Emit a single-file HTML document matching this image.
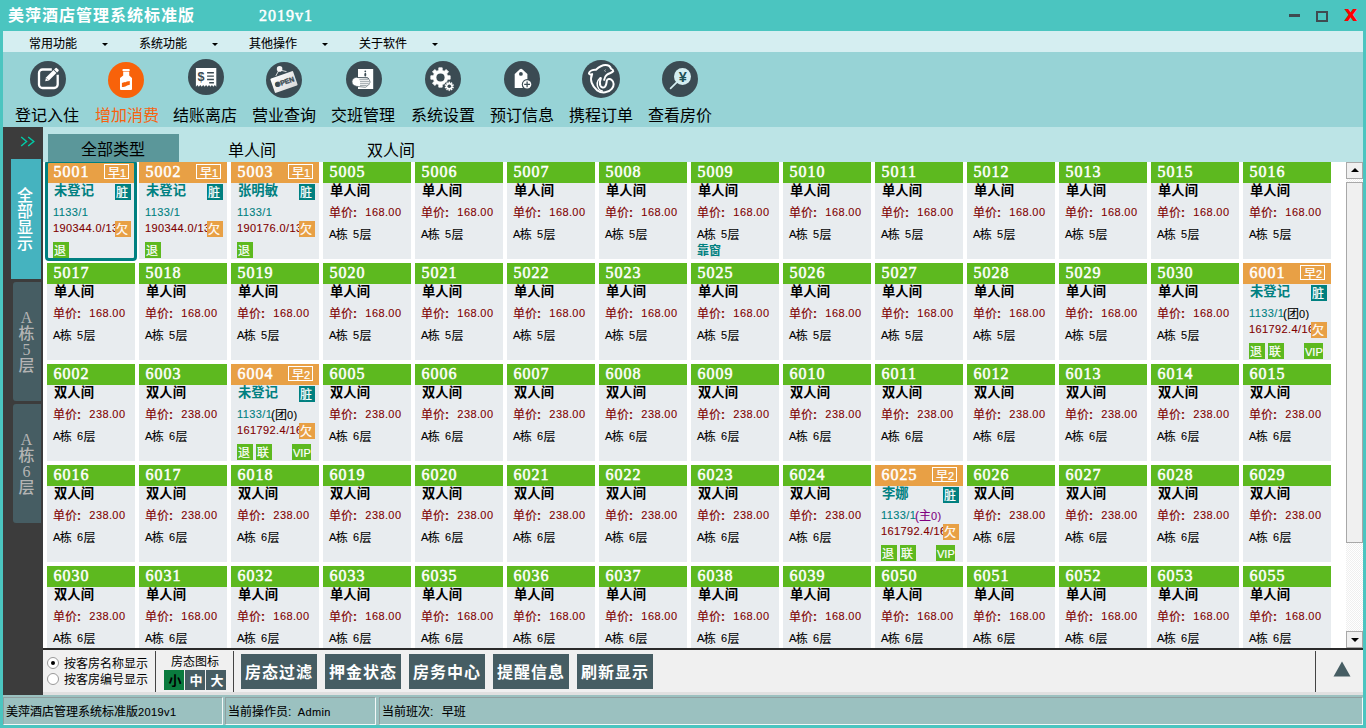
<!DOCTYPE html><html lang="zh-CN"><head><meta charset="utf-8"><title>美萍酒店管理系统标准版</title><style>
*{margin:0;padding:0;box-sizing:border-box}
html,body{width:1366px;height:728px;overflow:hidden}
body{background:#4bc5c0;position:relative;font-family:"Liberation Sans","Noto Sans CJK SC",sans-serif;font-size:12px;color:#000;line-height:1}
.a{position:absolute}
.t{position:absolute;white-space:nowrap;line-height:1}
#title{left:8px;top:8px;font-size:16px;font-weight:bold;color:#fff;letter-spacing:1px}
#ver{left:259px;top:8px;font-size:16px;-webkit-text-stroke:.5px #fff;color:#fff;letter-spacing:1px;font-family:"Liberation Serif","Noto Serif CJK SC",serif}
#menubar{left:3px;top:31px;width:1360px;height:21px;background:#d5eef1}
.mi{top:37.5px;font-size:12px}
.arr{position:absolute;top:43px;width:0;height:0;border-left:3px solid transparent;border-right:3px solid transparent;border-top:3px solid #000}
#toolbar{left:3px;top:52px;width:1360px;height:75px;background:#97d3d6}
.tl{top:108px;font-size:16px;width:80px;text-align:center}
.ic{position:absolute}
#tabs{left:43px;top:127px;width:1320px;height:35px;background:#bce4e6}
#tabsel{left:48px;top:134px;width:131px;height:28px;background:#5b979a}
.tab{font-size:16px}
#side{left:3px;top:127px;width:40px;height:568px;background:#3c3c3c}
.sb{position:absolute;font-size:16px;line-height:16px;text-align:center;font-weight:500;font-family:"Liberation Serif","Noto Sans CJK SC",sans-serif}
#grid{left:43px;top:162px;width:1303px;height:486px;background:#fff;overflow:hidden}
.c{position:absolute;width:88px;height:97px;background:#e8ecef}
.h{position:absolute;left:0;top:0;width:88px;height:21px}
.g{background:#5db91f}.o{background:#e8a045}
.n{position:absolute;left:6.5px;top:1.5px;font-size:16px;font-family:"Liberation Serif","Noto Serif CJK SC",serif;-webkit-text-stroke:.5px #fff;letter-spacing:1px;color:#fff;white-space:nowrap;line-height:16px}
.ty{position:absolute;left:7px;top:22px;font-size:13.33px;font-weight:bold;white-space:nowrap;line-height:14px}
.pr{position:absolute;left:6px;top:45px;word-spacing:5px;font-size:12px;color:#800000;white-space:nowrap;line-height:12px}
.fl{position:absolute;left:6px;top:67px;word-spacing:2px;font-size:12px;white-space:nowrap;line-height:12px}
.nm{position:absolute;left:7px;top:22px;font-size:13.33px;font-weight:bold;color:#008080;white-space:nowrap;line-height:14px}
.i1{position:absolute;left:6px;top:44px;font-size:12px;color:#008080;white-space:nowrap;line-height:12px}

.d{font-size:11px;letter-spacing:.4px}
.pr,.fl,.i1,.i2,.ex,.mi,.st{-webkit-text-stroke:.1px}
.pr .d,.fl .d{position:relative;top:-.6px}
.da{letter-spacing:-.7px}
.i2{position:absolute;left:6px;top:60px;font-size:12px;color:#800000;white-space:nowrap;line-height:12px;width:62px;overflow:hidden}
.bd{-webkit-text-stroke:.2px;position:absolute;width:16px;height:16px;color:#fff;font-size:12px;line-height:18px;text-align:left;padding-left:1px;white-space:nowrap;overflow:hidden}
.zang{left:68px;top:22px;background:#008080}
.qian{left:68px;top:59px;background:#e8a045}
.tui{left:6px;top:80px;background:#5db91f}
.lian{left:25px;top:80px;background:#5db91f}
.vip{left:61px;top:80px;width:19px;background:#5db91f;font-size:12px;padding-left:1px}
.zao{position:absolute;left:57px;top:2px;width:25px;-webkit-text-stroke:.2px;height:15px;border:1px solid #fff;color:#fff;font-size:12px;line-height:13px;padding-top:2px;padding-left:3px;text-align:left;white-space:nowrap}
.ex{position:absolute;left:40px;top:44.5px;font-size:12px;white-space:nowrap;line-height:12px}
.kc{position:absolute;left:6px;top:83px;font-size:12px;font-weight:bold;color:#008080;white-space:nowrap;line-height:12px}
#sel{left:2px;top:-2px;width:92px;height:101px;border:3px solid #008080;border-radius:4px}
#vscroll{left:1346px;top:162px;width:17px;height:486px;background:repeating-conic-gradient(#fff 0% 25%,#efefef 0% 50%) 0 0/2px 2px}
#bline{left:43px;top:648px;width:1320px;height:2px;background:#2a2a2a}
#bbar{left:43px;top:650px;width:1320px;height:45px;background:#f0f0f0}
.sep{position:absolute;top:651px;width:1px;height:41px;background:#444}
.btn{position:absolute;top:654px;width:76px;height:35px;background:#465d63;color:#fff;font-size:16px;font-weight:bold;text-align:center;line-height:37px;letter-spacing:1px;white-space:nowrap;overflow:hidden}
.sz{position:absolute;top:670px;width:20px;height:20px;font-size:13px;font-weight:bold;line-height:22px;text-align:center;padding-left:2px;overflow:hidden}
.radio{position:absolute;width:12px;height:12px;border-radius:50%;border:1px solid #999;background:#fff}
#status{left:3px;top:695px;width:1360px;height:30px;background:#9bc1c0}
.sp{position:absolute;top:697px;height:28px;border-top:1px solid #8f9f9f;border-left:1px solid #8f9f9f;border-right:1px solid #f4f8f8;border-bottom:1px solid #f4f8f8;background:#9bc1c0}
.st{top:706px;font-size:12px;word-spacing:3px}
</style></head><body>
<div class="t" id="title">美萍酒店管理系统标准版</div>
<div class="t" id="ver">2019v1</div>
<div class="a" style="left:1289px;top:14px;width:11px;height:3px;background:#3f4a50"></div>
<div class="a" style="left:1316px;top:11px;width:12px;height:11px;border:2px solid #3f4a50"></div>
<div class="t" style="left:1344px;top:4px;font-size:21px;font-weight:bold;color:#f00;font-family:&quot;DejaVu Sans&quot;,&quot;Liberation Sans&quot;,sans-serif">x</div>
<div class="a" id="menubar"></div>
<div class="t mi" style="left:29px">常用功能</div>
<div class="arr" style="left:102px"></div>
<div class="t mi" style="left:139px">系统功能</div>
<div class="arr" style="left:212px"></div>
<div class="t mi" style="left:249px">其他操作</div>
<div class="arr" style="left:322px"></div>
<div class="t mi" style="left:359px">关于软件</div>
<div class="arr" style="left:432px"></div>
<div class="a" id="toolbar"></div>
<div class="t tl" style="left:7px;color:#000">登记入住</div>
<div class="t tl" style="left:87px;color:#f8620e">增加消费</div>
<div class="t tl" style="left:165px;color:#000">结账离店</div>
<div class="t tl" style="left:244px;color:#000">营业查询</div>
<div class="t tl" style="left:323px;color:#000">交班管理</div>
<div class="t tl" style="left:403px;color:#000">系统设置</div>
<div class="t tl" style="left:482px;color:#000">预订信息</div>
<div class="t tl" style="left:561px;color:#000">携程订单</div>
<div class="t tl" style="left:640px;color:#000">查看房价</div>
<svg class="ic" style="left:30px;top:61px" width="36" height="36" viewBox="0 0 36 36"><circle cx="18" cy="18" r="18" fill="#3b4b53"/><path d="M21.8 8.5H12.6a3.6 3.6 0 0 0-3.6 3.6V23.4a3.6 3.6 0 0 0 3.6 3.6H24.1a3.6 3.6 0 0 0 3.6-3.6V13.8" fill="none" stroke="#fff" stroke-width="2.3"/><path d="M15.2 20.3L15.98 16.55L23.47 9.06L26.44 12.03L18.95 19.52Z" fill="#fff"/><path d="M24.11 8.42L25.6 6.93a0.8 0.8 0 0 1 1.12 0L28.57 8.78a0.8 0.8 0 0 1 0 1.12L27.08 11.39Z" fill="#fff"/><path d="M16.3 17.2L18.3 19.2" stroke="#3b4b53" stroke-width="0.5"/></svg>
<svg class="ic" style="left:108px;top:62px" width="36" height="36" viewBox="0 0 36 36"><circle cx="18" cy="18" r="18" fill="#f8620a"/><rect x="14.4" y="7" width="7.4" height="2.3" rx="1.1" fill="#fff"/><path d="M15.2 9.8H21.2V13.6L24 16.1V27.1a1 1 0 0 1-1 1H13a1 1 0 0 1-1-1V16.1L15.2 13.6Z" fill="#fff"/><path d="M13.9 20.9C16 20.2 17 20.6 18.3 19.8C19.5 19 20.5 19.3 21.8 18.9V22.7C20.5 23.2 19.5 22.9 18.3 23.9C17 24.8 16 24.5 13.9 25.1Z" fill="#f8620a"/></svg>
<svg class="ic" style="left:188px;top:59px" width="36" height="36" viewBox="0 0 36 36"><circle cx="18" cy="18" r="18" fill="#3b4b53"/><path d="M7.9 8.9H28.3V27.8L26.84 26.00 L25.39 27.80L23.93 26.00 L22.47 27.80L21.02 26.00 L19.56 27.80L18.10 26.00 L16.64 27.80L15.19 26.00 L13.73 27.80L12.27 26.00 L10.82 27.80L9.36 26.00 L7.90 27.80Z" fill="#fff"/><text x="13.1" y="22.4" font-family="Liberation Sans,sans-serif" font-weight="bold" font-size="12.6" text-anchor="middle" fill="#3b4b53">$</text><path d="M19.1 13.8H25.9M19.1 17.1H25.9M19.1 20.5H25.9M21.2 23.7H25.9" stroke="#3b4b53" stroke-width="1.45"/></svg>
<svg class="ic" style="left:266px;top:62px" width="36" height="36" viewBox="0 0 36 36"><defs><linearGradient id="og" x1="0" y1="0" x2="1" y2="1"><stop offset="0" stop-color="#fff"/><stop offset="1" stop-color="#d8d8d8"/></linearGradient></defs><circle cx="18" cy="18" r="18" fill="#3b4b53"/><path d="M13.6 7L9.8 13.9M13.6 8L20.5 9.6" stroke="#eee" stroke-width="0.9" fill="none"/><circle cx="13.6" cy="6.9" r="2.8" fill="#f4f4f4"/><g transform="rotate(-19.2 18 20)"><rect x="6" y="12.4" width="24" height="15.2" rx="1" fill="url(#og)"/><text x="18.6" y="22.6" font-family="Liberation Sans,sans-serif" font-weight="bold" font-size="7" text-anchor="middle" stroke="#3b4b53" stroke-width="0.35" fill="#3b4b53">OPEN</text><circle cx="10.9" cy="20.1" r="2.2" fill="#3b4b53"/></g></svg>
<svg class="ic" style="left:346px;top:61px" width="36" height="36" viewBox="0 0 36 36"><circle cx="18" cy="18" r="18" fill="#3b4b53"/><rect x="12" y="8" width="15.2" height="20" fill="#fff"/><circle cx="19.3" cy="10.3" r="0.9" fill="#3b4b53"/><ellipse cx="19.3" cy="13.7" rx="1" ry="1.9" fill="#3b4b53"/><path d="M10.7 16.2C8 16.6 6 18.2 6 20.6C6 23.2 7.6 24.8 10.5 25.3L19 26.3C20.2 26.3 20.9 25.6 20.9 24.7C22.3 24.5 23.1 23.8 23.1 22.8C23.9 22.3 24.2 21.2 23.9 20.3C23.6 19.2 23.2 18.6 22.7 18C22.4 17.2 21.8 16.8 21.2 16.8L12 16.6Z" fill="#fff" stroke="#56646b" stroke-width="0.7"/><path d="M10.7 16.1L12 16.5L21.2 16.7C22 16.8 22.5 17.3 22.8 18" fill="none" stroke="#3b4b53" stroke-width="0.7"/><path d="M13.4 18.7H22.6M14 20.7H23.6M14 22.7H22.8M14 24.6H20.6" stroke="#8e999e" stroke-width="0.9"/></svg>
<svg class="ic" style="left:425px;top:61px" width="36" height="36" viewBox="0 0 36 36"><circle cx="18" cy="18" r="18" fill="#3b4b53"/><path d="M13.80 9.40L13.78 6.85L17.22 6.85L17.20 9.40L19.31 10.28L21.10 8.46L23.54 10.90L21.72 12.69L22.60 14.80L25.15 14.78L25.15 18.22L22.60 18.20L21.72 20.31L23.54 22.10L21.10 24.54L19.31 22.72L17.20 23.60L17.22 26.15L13.78 26.15L13.80 23.60L11.69 22.72L9.90 24.54L7.46 22.10L9.28 20.31L8.40 18.20L5.85 18.22L5.85 14.78L8.40 14.80L9.28 12.69L7.46 10.90L9.90 8.46L11.69 10.28Z" fill="#fff" stroke="#fff" stroke-linejoin="round" stroke-width="0.8"/><circle cx="15.5" cy="16.5" r="4.1" fill="#3b4b53"/><circle cx="24.3" cy="25.3" r="5.3" fill="#3b4b53"/><path d="M23.68 22.06L23.67 20.84L24.93 20.84L24.92 22.06L25.71 22.31L26.41 21.32L27.43 22.07L26.71 23.04L27.19 23.71L28.34 23.32L28.73 24.53L27.57 24.89L27.57 25.71L28.73 26.07L28.34 27.28L27.19 26.89L26.71 27.56L27.43 28.53L26.41 29.28L25.71 28.29L24.92 28.54L24.93 29.76L23.67 29.76L23.68 28.54L22.89 28.29L22.19 29.28L21.17 28.53L21.89 27.56L21.41 26.89L20.26 27.28L19.87 26.07L21.03 25.71L21.03 24.89L19.87 24.53L20.26 23.32L21.41 23.71L21.89 23.04L21.17 22.07L22.19 21.32L22.89 22.31Z" fill="#fff" stroke="#fff" stroke-linejoin="round" stroke-width="0.3"/><circle cx="24.3" cy="25.3" r="1.8" fill="#3b4b53"/></svg>
<svg class="ic" style="left:504px;top:61px" width="36" height="36" viewBox="0 0 36 36"><circle cx="18" cy="18" r="18" fill="#3b4b53"/><path d="M10.7 26.9V12.9L15.6 8.5a2.2 2.2 0 0 1 2.9 0L23.4 12.9V26.9Z" fill="#fff"/><circle cx="16.9" cy="12.9" r="1.9" fill="#3b4b53"/><circle cx="23.1" cy="23.4" r="5.3" fill="#3b4b53"/><circle cx="23.1" cy="23.4" r="4.2" fill="#fff"/><path d="M20.2 23.4H26M23.1 20.5V26.3" stroke="#3b4b53" stroke-width="1.2"/></svg>
<svg class="ic" style="left:582px;top:60px" width="38" height="38" viewBox="0 0 38 38"><circle cx="19" cy="19" r="19" fill="#3b4b53"/><path d="M 7.00 13.37 C 7.32 10.85 10.79 9.58 13.95 9.77 C 16.48 7.37 20.27 4.97 23.43 4.97 C 26.59 4.97 28.48 6.74 28.99 8.63 C 30.38 9.14 31.26 10.02 31.26 11.16 C 30.06 12.93 27.22 13.18 24.82 14.83 C 23.30 16.09 22.54 17.79 22.16 19.88" fill="none" stroke="#fff" stroke-width="2" stroke-linecap="round" stroke-linejoin="round"/><path d="M 7.00 13.37 C 7.32 14.64 8.90 14.83 10.16 14.00 C 7.32 20.01 10.16 26.32 15.21 30.43 C 20.27 33.90 26.59 32.64 29.74 28.85 C 32.40 25.69 32.27 21.90 29.43 19.69 C 27.85 18.43 25.45 18.87 24.82 20.51 C 24.44 22.53 24.69 24.55 23.11 26.64 C 21.53 28.22 19.13 27.59 18.25 25.37 C 17.43 23.16 17.87 20.64 18.88 18.11" fill="none" stroke="#fff" stroke-width="2" stroke-linecap="round" stroke-linejoin="round"/><path d="M 18.25 17.79 C 15.53 20.32 13.95 24.43 16.79 28.85 C 18.06 30.43 19.32 30.74 20.27 30.87" fill="none" stroke="#fff" stroke-width="1.5" stroke-linecap="round"/><path d="M 23.74 9.58 L 22.48 10.66 L 23.74 11.67" fill="none" stroke="#fff" stroke-width="0.6"/></svg>
<svg class="ic" style="left:662px;top:61px" width="36" height="36" viewBox="0 0 36 36"><circle cx="18" cy="18" r="18" fill="#3b4b53"/><path d="M14.4 21.6L8.6 27.4" stroke="#d5eef1" stroke-width="1.7" stroke-linecap="round"/><circle cx="20.5" cy="15.5" r="8.5" fill="#d5eef1"/><text x="20.9" y="21.1" font-family="Liberation Sans,sans-serif" font-weight="bold" font-size="14.5" text-anchor="middle" fill="#1f5055">¥</text></svg>
<div class="a" id="tabs"></div><div class="a" id="tabsel"></div>
<div class="t tab" style="left:81px;top:142px">全部类型</div>
<div class="t tab" style="left:228px;top:143px">单人间</div>
<div class="t tab" style="left:367px;top:143px">双人间</div>
<div class="a" id="side"></div>
<svg class="a" style="left:20px;top:136px" width="16" height="11" viewBox="0 0 16 11"><path d="M1.2 1L6.6 5.5L1.2 10M8.2 1L13.8 5.5L8.2 10" fill="none" stroke="#00cda8" stroke-width="1.4"/></svg>
<div class="sb" style="left:11px;top:159px;width:30px;height:120px;background:#45b3bf;color:#fff;padding-top:29px;padding-right:2px">全<br>部<br>显<br>示</div>
<div class="sb" style="left:13px;top:282px;width:28px;height:119px;background:#465d63;color:#b4b4b4;padding-top:28px;padding-right:1px;border-radius:3px 0 0 3px">A<br>栋<br>5<br>层</div>
<div class="sb" style="left:13px;top:404px;width:28px;height:119px;background:#465d63;color:#b4b4b4;padding-top:28px;padding-right:1px;border-radius:3px 0 0 3px">A<br>栋<br>6<br>层</div>
<div class="a" id="grid">
<div class="c" style="left:4px;top:0px"><div class="h o"></div><div class="n">5001</div><div class="zao">早<span class="d">1</span></div><div class="nm">未登记</div><div class="bd zang">脏</div><div class="i1"><span class="d">1133/1</span></div><div class="i2"><span class="d">190344.0/13</span></div><div class="bd qian">欠</div><div class="bd tui">退</div></div>
<div class="c" style="left:96px;top:0px"><div class="h o"></div><div class="n">5002</div><div class="zao">早<span class="d">1</span></div><div class="nm">未登记</div><div class="bd zang">脏</div><div class="i1"><span class="d">1133/1</span></div><div class="i2"><span class="d">190344.0/13</span></div><div class="bd qian">欠</div><div class="bd tui">退</div></div>
<div class="c" style="left:188px;top:0px"><div class="h o"></div><div class="n">5003</div><div class="zao">早<span class="d">1</span></div><div class="nm">张明敏</div><div class="bd zang">脏</div><div class="i1"><span class="d">1133/1</span></div><div class="i2"><span class="d">190176.0/13</span></div><div class="bd qian">欠</div><div class="bd tui">退</div></div>
<div class="c" style="left:280px;top:0px"><div class="h g"></div><div class="n">5005</div><div class="ty">单人间</div><div class="pr">单价<b>:</b> <span class="d">168.00</span></div><div class="fl"><span class="d da">A</span>栋 <span class="d">5</span>层</div></div>
<div class="c" style="left:372px;top:0px"><div class="h g"></div><div class="n">5006</div><div class="ty">单人间</div><div class="pr">单价<b>:</b> <span class="d">168.00</span></div><div class="fl"><span class="d da">A</span>栋 <span class="d">5</span>层</div></div>
<div class="c" style="left:464px;top:0px"><div class="h g"></div><div class="n">5007</div><div class="ty">单人间</div><div class="pr">单价<b>:</b> <span class="d">168.00</span></div><div class="fl"><span class="d da">A</span>栋 <span class="d">5</span>层</div></div>
<div class="c" style="left:556px;top:0px"><div class="h g"></div><div class="n">5008</div><div class="ty">单人间</div><div class="pr">单价<b>:</b> <span class="d">168.00</span></div><div class="fl"><span class="d da">A</span>栋 <span class="d">5</span>层</div></div>
<div class="c" style="left:648px;top:0px"><div class="h g"></div><div class="n">5009</div><div class="ty">单人间</div><div class="pr">单价<b>:</b> <span class="d">168.00</span></div><div class="fl"><span class="d da">A</span>栋 <span class="d">5</span>层</div><div class="kc">靠窗</div></div>
<div class="c" style="left:740px;top:0px"><div class="h g"></div><div class="n">5010</div><div class="ty">单人间</div><div class="pr">单价<b>:</b> <span class="d">168.00</span></div><div class="fl"><span class="d da">A</span>栋 <span class="d">5</span>层</div></div>
<div class="c" style="left:832px;top:0px"><div class="h g"></div><div class="n">5011</div><div class="ty">单人间</div><div class="pr">单价<b>:</b> <span class="d">168.00</span></div><div class="fl"><span class="d da">A</span>栋 <span class="d">5</span>层</div></div>
<div class="c" style="left:924px;top:0px"><div class="h g"></div><div class="n">5012</div><div class="ty">单人间</div><div class="pr">单价<b>:</b> <span class="d">168.00</span></div><div class="fl"><span class="d da">A</span>栋 <span class="d">5</span>层</div></div>
<div class="c" style="left:1016px;top:0px"><div class="h g"></div><div class="n">5013</div><div class="ty">单人间</div><div class="pr">单价<b>:</b> <span class="d">168.00</span></div><div class="fl"><span class="d da">A</span>栋 <span class="d">5</span>层</div></div>
<div class="c" style="left:1108px;top:0px"><div class="h g"></div><div class="n">5015</div><div class="ty">单人间</div><div class="pr">单价<b>:</b> <span class="d">168.00</span></div><div class="fl"><span class="d da">A</span>栋 <span class="d">5</span>层</div></div>
<div class="c" style="left:1200px;top:0px"><div class="h g"></div><div class="n">5016</div><div class="ty">单人间</div><div class="pr">单价<b>:</b> <span class="d">168.00</span></div><div class="fl"><span class="d da">A</span>栋 <span class="d">5</span>层</div></div>
<div class="c" style="left:4px;top:101px"><div class="h g"></div><div class="n">5017</div><div class="ty">单人间</div><div class="pr">单价<b>:</b> <span class="d">168.00</span></div><div class="fl"><span class="d da">A</span>栋 <span class="d">5</span>层</div></div>
<div class="c" style="left:96px;top:101px"><div class="h g"></div><div class="n">5018</div><div class="ty">单人间</div><div class="pr">单价<b>:</b> <span class="d">168.00</span></div><div class="fl"><span class="d da">A</span>栋 <span class="d">5</span>层</div></div>
<div class="c" style="left:188px;top:101px"><div class="h g"></div><div class="n">5019</div><div class="ty">单人间</div><div class="pr">单价<b>:</b> <span class="d">168.00</span></div><div class="fl"><span class="d da">A</span>栋 <span class="d">5</span>层</div></div>
<div class="c" style="left:280px;top:101px"><div class="h g"></div><div class="n">5020</div><div class="ty">单人间</div><div class="pr">单价<b>:</b> <span class="d">168.00</span></div><div class="fl"><span class="d da">A</span>栋 <span class="d">5</span>层</div></div>
<div class="c" style="left:372px;top:101px"><div class="h g"></div><div class="n">5021</div><div class="ty">单人间</div><div class="pr">单价<b>:</b> <span class="d">168.00</span></div><div class="fl"><span class="d da">A</span>栋 <span class="d">5</span>层</div></div>
<div class="c" style="left:464px;top:101px"><div class="h g"></div><div class="n">5022</div><div class="ty">单人间</div><div class="pr">单价<b>:</b> <span class="d">168.00</span></div><div class="fl"><span class="d da">A</span>栋 <span class="d">5</span>层</div></div>
<div class="c" style="left:556px;top:101px"><div class="h g"></div><div class="n">5023</div><div class="ty">单人间</div><div class="pr">单价<b>:</b> <span class="d">168.00</span></div><div class="fl"><span class="d da">A</span>栋 <span class="d">5</span>层</div></div>
<div class="c" style="left:648px;top:101px"><div class="h g"></div><div class="n">5025</div><div class="ty">单人间</div><div class="pr">单价<b>:</b> <span class="d">168.00</span></div><div class="fl"><span class="d da">A</span>栋 <span class="d">5</span>层</div></div>
<div class="c" style="left:740px;top:101px"><div class="h g"></div><div class="n">5026</div><div class="ty">单人间</div><div class="pr">单价<b>:</b> <span class="d">168.00</span></div><div class="fl"><span class="d da">A</span>栋 <span class="d">5</span>层</div></div>
<div class="c" style="left:832px;top:101px"><div class="h g"></div><div class="n">5027</div><div class="ty">单人间</div><div class="pr">单价<b>:</b> <span class="d">168.00</span></div><div class="fl"><span class="d da">A</span>栋 <span class="d">5</span>层</div></div>
<div class="c" style="left:924px;top:101px"><div class="h g"></div><div class="n">5028</div><div class="ty">单人间</div><div class="pr">单价<b>:</b> <span class="d">168.00</span></div><div class="fl"><span class="d da">A</span>栋 <span class="d">5</span>层</div></div>
<div class="c" style="left:1016px;top:101px"><div class="h g"></div><div class="n">5029</div><div class="ty">单人间</div><div class="pr">单价<b>:</b> <span class="d">168.00</span></div><div class="fl"><span class="d da">A</span>栋 <span class="d">5</span>层</div></div>
<div class="c" style="left:1108px;top:101px"><div class="h g"></div><div class="n">5030</div><div class="ty">单人间</div><div class="pr">单价<b>:</b> <span class="d">168.00</span></div><div class="fl"><span class="d da">A</span>栋 <span class="d">5</span>层</div></div>
<div class="c" style="left:1200px;top:101px"><div class="h o"></div><div class="n">6001</div><div class="zao">早<span class="d">2</span></div><div class="nm">未登记</div><div class="bd zang">脏</div><div class="i1"><span class="d">1133/1</span></div><div class="ex">(团<span class="d">0)</span></div><div class="i2"><span class="d">161792.4/16</span></div><div class="bd qian">欠</div><div class="bd tui">退</div><div class="bd lian">联</div><div class="bd vip"><span class="d" style="letter-spacing:0">VIP</span></div></div>
<div class="c" style="left:4px;top:202px"><div class="h g"></div><div class="n">6002</div><div class="ty">双人间</div><div class="pr">单价<b>:</b> <span class="d">238.00</span></div><div class="fl"><span class="d da">A</span>栋 <span class="d">6</span>层</div></div>
<div class="c" style="left:96px;top:202px"><div class="h g"></div><div class="n">6003</div><div class="ty">双人间</div><div class="pr">单价<b>:</b> <span class="d">238.00</span></div><div class="fl"><span class="d da">A</span>栋 <span class="d">6</span>层</div></div>
<div class="c" style="left:188px;top:202px"><div class="h o"></div><div class="n">6004</div><div class="zao">早<span class="d">2</span></div><div class="nm">未登记</div><div class="bd zang">脏</div><div class="i1"><span class="d">1133/1</span></div><div class="ex">(团<span class="d">0)</span></div><div class="i2"><span class="d">161792.4/16</span></div><div class="bd qian">欠</div><div class="bd tui">退</div><div class="bd lian">联</div><div class="bd vip"><span class="d" style="letter-spacing:0">VIP</span></div></div>
<div class="c" style="left:280px;top:202px"><div class="h g"></div><div class="n">6005</div><div class="ty">双人间</div><div class="pr">单价<b>:</b> <span class="d">238.00</span></div><div class="fl"><span class="d da">A</span>栋 <span class="d">6</span>层</div></div>
<div class="c" style="left:372px;top:202px"><div class="h g"></div><div class="n">6006</div><div class="ty">双人间</div><div class="pr">单价<b>:</b> <span class="d">238.00</span></div><div class="fl"><span class="d da">A</span>栋 <span class="d">6</span>层</div></div>
<div class="c" style="left:464px;top:202px"><div class="h g"></div><div class="n">6007</div><div class="ty">双人间</div><div class="pr">单价<b>:</b> <span class="d">238.00</span></div><div class="fl"><span class="d da">A</span>栋 <span class="d">6</span>层</div></div>
<div class="c" style="left:556px;top:202px"><div class="h g"></div><div class="n">6008</div><div class="ty">双人间</div><div class="pr">单价<b>:</b> <span class="d">238.00</span></div><div class="fl"><span class="d da">A</span>栋 <span class="d">6</span>层</div></div>
<div class="c" style="left:648px;top:202px"><div class="h g"></div><div class="n">6009</div><div class="ty">双人间</div><div class="pr">单价<b>:</b> <span class="d">238.00</span></div><div class="fl"><span class="d da">A</span>栋 <span class="d">6</span>层</div></div>
<div class="c" style="left:740px;top:202px"><div class="h g"></div><div class="n">6010</div><div class="ty">双人间</div><div class="pr">单价<b>:</b> <span class="d">238.00</span></div><div class="fl"><span class="d da">A</span>栋 <span class="d">6</span>层</div></div>
<div class="c" style="left:832px;top:202px"><div class="h g"></div><div class="n">6011</div><div class="ty">双人间</div><div class="pr">单价<b>:</b> <span class="d">238.00</span></div><div class="fl"><span class="d da">A</span>栋 <span class="d">6</span>层</div></div>
<div class="c" style="left:924px;top:202px"><div class="h g"></div><div class="n">6012</div><div class="ty">双人间</div><div class="pr">单价<b>:</b> <span class="d">238.00</span></div><div class="fl"><span class="d da">A</span>栋 <span class="d">6</span>层</div></div>
<div class="c" style="left:1016px;top:202px"><div class="h g"></div><div class="n">6013</div><div class="ty">双人间</div><div class="pr">单价<b>:</b> <span class="d">238.00</span></div><div class="fl"><span class="d da">A</span>栋 <span class="d">6</span>层</div></div>
<div class="c" style="left:1108px;top:202px"><div class="h g"></div><div class="n">6014</div><div class="ty">双人间</div><div class="pr">单价<b>:</b> <span class="d">238.00</span></div><div class="fl"><span class="d da">A</span>栋 <span class="d">6</span>层</div></div>
<div class="c" style="left:1200px;top:202px"><div class="h g"></div><div class="n">6015</div><div class="ty">双人间</div><div class="pr">单价<b>:</b> <span class="d">238.00</span></div><div class="fl"><span class="d da">A</span>栋 <span class="d">6</span>层</div></div>
<div class="c" style="left:4px;top:303px"><div class="h g"></div><div class="n">6016</div><div class="ty">双人间</div><div class="pr">单价<b>:</b> <span class="d">238.00</span></div><div class="fl"><span class="d da">A</span>栋 <span class="d">6</span>层</div></div>
<div class="c" style="left:96px;top:303px"><div class="h g"></div><div class="n">6017</div><div class="ty">双人间</div><div class="pr">单价<b>:</b> <span class="d">238.00</span></div><div class="fl"><span class="d da">A</span>栋 <span class="d">6</span>层</div></div>
<div class="c" style="left:188px;top:303px"><div class="h g"></div><div class="n">6018</div><div class="ty">双人间</div><div class="pr">单价<b>:</b> <span class="d">238.00</span></div><div class="fl"><span class="d da">A</span>栋 <span class="d">6</span>层</div></div>
<div class="c" style="left:280px;top:303px"><div class="h g"></div><div class="n">6019</div><div class="ty">双人间</div><div class="pr">单价<b>:</b> <span class="d">238.00</span></div><div class="fl"><span class="d da">A</span>栋 <span class="d">6</span>层</div></div>
<div class="c" style="left:372px;top:303px"><div class="h g"></div><div class="n">6020</div><div class="ty">双人间</div><div class="pr">单价<b>:</b> <span class="d">238.00</span></div><div class="fl"><span class="d da">A</span>栋 <span class="d">6</span>层</div></div>
<div class="c" style="left:464px;top:303px"><div class="h g"></div><div class="n">6021</div><div class="ty">双人间</div><div class="pr">单价<b>:</b> <span class="d">238.00</span></div><div class="fl"><span class="d da">A</span>栋 <span class="d">6</span>层</div></div>
<div class="c" style="left:556px;top:303px"><div class="h g"></div><div class="n">6022</div><div class="ty">双人间</div><div class="pr">单价<b>:</b> <span class="d">238.00</span></div><div class="fl"><span class="d da">A</span>栋 <span class="d">6</span>层</div></div>
<div class="c" style="left:648px;top:303px"><div class="h g"></div><div class="n">6023</div><div class="ty">双人间</div><div class="pr">单价<b>:</b> <span class="d">238.00</span></div><div class="fl"><span class="d da">A</span>栋 <span class="d">6</span>层</div></div>
<div class="c" style="left:740px;top:303px"><div class="h g"></div><div class="n">6024</div><div class="ty">双人间</div><div class="pr">单价<b>:</b> <span class="d">238.00</span></div><div class="fl"><span class="d da">A</span>栋 <span class="d">6</span>层</div></div>
<div class="c" style="left:832px;top:303px"><div class="h o"></div><div class="n">6025</div><div class="zao">早<span class="d">2</span></div><div class="nm">李娜</div><div class="bd zang">脏</div><div class="i1"><span class="d">1133/1</span></div><div class="ex" style="color:#800080">(主<span class="d">0)</span></div><div class="i2"><span class="d">161792.4/16</span></div><div class="bd qian">欠</div><div class="bd tui">退</div><div class="bd lian">联</div><div class="bd vip"><span class="d" style="letter-spacing:0">VIP</span></div></div>
<div class="c" style="left:924px;top:303px"><div class="h g"></div><div class="n">6026</div><div class="ty">双人间</div><div class="pr">单价<b>:</b> <span class="d">238.00</span></div><div class="fl"><span class="d da">A</span>栋 <span class="d">6</span>层</div></div>
<div class="c" style="left:1016px;top:303px"><div class="h g"></div><div class="n">6027</div><div class="ty">双人间</div><div class="pr">单价<b>:</b> <span class="d">238.00</span></div><div class="fl"><span class="d da">A</span>栋 <span class="d">6</span>层</div></div>
<div class="c" style="left:1108px;top:303px"><div class="h g"></div><div class="n">6028</div><div class="ty">双人间</div><div class="pr">单价<b>:</b> <span class="d">238.00</span></div><div class="fl"><span class="d da">A</span>栋 <span class="d">6</span>层</div></div>
<div class="c" style="left:1200px;top:303px"><div class="h g"></div><div class="n">6029</div><div class="ty">双人间</div><div class="pr">单价<b>:</b> <span class="d">238.00</span></div><div class="fl"><span class="d da">A</span>栋 <span class="d">6</span>层</div></div>
<div class="c" style="left:4px;top:404px"><div class="h g"></div><div class="n">6030</div><div class="ty">双人间</div><div class="pr">单价<b>:</b> <span class="d">238.00</span></div><div class="fl"><span class="d da">A</span>栋 <span class="d">6</span>层</div></div>
<div class="c" style="left:96px;top:404px"><div class="h g"></div><div class="n">6031</div><div class="ty">单人间</div><div class="pr">单价<b>:</b> <span class="d">168.00</span></div><div class="fl"><span class="d da">A</span>栋 <span class="d">6</span>层</div></div>
<div class="c" style="left:188px;top:404px"><div class="h g"></div><div class="n">6032</div><div class="ty">单人间</div><div class="pr">单价<b>:</b> <span class="d">168.00</span></div><div class="fl"><span class="d da">A</span>栋 <span class="d">6</span>层</div></div>
<div class="c" style="left:280px;top:404px"><div class="h g"></div><div class="n">6033</div><div class="ty">单人间</div><div class="pr">单价<b>:</b> <span class="d">168.00</span></div><div class="fl"><span class="d da">A</span>栋 <span class="d">6</span>层</div></div>
<div class="c" style="left:372px;top:404px"><div class="h g"></div><div class="n">6035</div><div class="ty">单人间</div><div class="pr">单价<b>:</b> <span class="d">168.00</span></div><div class="fl"><span class="d da">A</span>栋 <span class="d">6</span>层</div></div>
<div class="c" style="left:464px;top:404px"><div class="h g"></div><div class="n">6036</div><div class="ty">单人间</div><div class="pr">单价<b>:</b> <span class="d">168.00</span></div><div class="fl"><span class="d da">A</span>栋 <span class="d">6</span>层</div></div>
<div class="c" style="left:556px;top:404px"><div class="h g"></div><div class="n">6037</div><div class="ty">单人间</div><div class="pr">单价<b>:</b> <span class="d">168.00</span></div><div class="fl"><span class="d da">A</span>栋 <span class="d">6</span>层</div></div>
<div class="c" style="left:648px;top:404px"><div class="h g"></div><div class="n">6038</div><div class="ty">单人间</div><div class="pr">单价<b>:</b> <span class="d">168.00</span></div><div class="fl"><span class="d da">A</span>栋 <span class="d">6</span>层</div></div>
<div class="c" style="left:740px;top:404px"><div class="h g"></div><div class="n">6039</div><div class="ty">单人间</div><div class="pr">单价<b>:</b> <span class="d">168.00</span></div><div class="fl"><span class="d da">A</span>栋 <span class="d">6</span>层</div></div>
<div class="c" style="left:832px;top:404px"><div class="h g"></div><div class="n">6050</div><div class="ty">单人间</div><div class="pr">单价<b>:</b> <span class="d">168.00</span></div><div class="fl"><span class="d da">A</span>栋 <span class="d">6</span>层</div></div>
<div class="c" style="left:924px;top:404px"><div class="h g"></div><div class="n">6051</div><div class="ty">单人间</div><div class="pr">单价<b>:</b> <span class="d">168.00</span></div><div class="fl"><span class="d da">A</span>栋 <span class="d">6</span>层</div></div>
<div class="c" style="left:1016px;top:404px"><div class="h g"></div><div class="n">6052</div><div class="ty">单人间</div><div class="pr">单价<b>:</b> <span class="d">168.00</span></div><div class="fl"><span class="d da">A</span>栋 <span class="d">6</span>层</div></div>
<div class="c" style="left:1108px;top:404px"><div class="h g"></div><div class="n">6053</div><div class="ty">单人间</div><div class="pr">单价<b>:</b> <span class="d">168.00</span></div><div class="fl"><span class="d da">A</span>栋 <span class="d">6</span>层</div></div>
<div class="c" style="left:1200px;top:404px"><div class="h g"></div><div class="n">6055</div><div class="ty">单人间</div><div class="pr">单价<b>:</b> <span class="d">168.00</span></div><div class="fl"><span class="d da">A</span>栋 <span class="d">6</span>层</div></div>
<div class="a" id="sel"></div>
</div>
<div class="a" id="vscroll"></div>
<div class="a" style="left:1346px;top:162px;width:17px;height:17px;background:#f0f0f0;border:1px solid #a8a8a8"></div>
<div class="a" style="left:1351px;top:168px;width:0;height:0;border-left:4px solid transparent;border-right:4px solid transparent;border-bottom:4px solid #000"></div>
<div class="a" style="left:1346px;top:182px;width:17px;height:361px;background:#f0f0f0;border:1px solid #a8a8a8"></div>
<div class="a" style="left:1346px;top:631px;width:17px;height:17px;background:#f0f0f0;border:1px solid #a8a8a8"></div>
<div class="a" style="left:1351px;top:638px;width:0;height:0;border-left:4px solid transparent;border-right:4px solid transparent;border-top:4px solid #000"></div>
<div class="a" id="bline"></div><div class="a" id="bbar"></div>
<div class="radio" style="left:47px;top:657px"></div><div class="a" style="left:51px;top:661px;width:4px;height:4px;border-radius:50%;background:#000"></div>
<div class="radio" style="left:47px;top:673px"></div>
<div class="t" style="left:64px;top:658px">按客房名称显示</div>
<div class="t" style="left:64px;top:674px">按客房编号显示</div>
<div class="sep" style="left:155px"></div>
<div class="sep" style="left:233px"></div>
<div class="sep" style="left:1315px"></div>
<div class="t" style="left:171px;top:656px">房态图标</div>
<div class="sz" style="left:164px;background:#0a7b3e;color:#000">小</div>
<div class="sz" style="left:185px;background:#465d63;color:#fff">中</div>
<div class="sz" style="left:206px;background:#465d63;color:#fff">大</div>
<div class="btn" style="left:241px">房态过滤</div>
<div class="btn" style="left:325px">押金状态</div>
<div class="btn" style="left:409px">房务中心</div>
<div class="btn" style="left:493px">提醒信息</div>
<div class="btn" style="left:577px">刷新显示</div>
<svg class="a" style="left:1333px;top:661px" width="18" height="16" viewBox="0 0 18 16"><path d="M9 0.5L17.5 15.5L0.5 15.5Z" fill="#465d63"/></svg>
<div class="a" style="left:43px;top:692px;width:1320px;height:3px;background:#e0e0e0"></div>
<div class="a" id="status"></div>
<div class="sp" style="left:3px;width:220px"></div><div class="sp" style="left:225px;width:151px"></div><div class="sp" style="left:379px;width:984px"></div>
<div class="t st" style="left:6px">美萍酒店管理系统标准版<span class="d">2019v1</span></div>
<div class="t st" style="left:228px">当前操作员: <span class="d">Admin</span></div>
<div class="t st" style="left:382px;word-spacing:5px">当前班次: 早班</div>
</body></html>
